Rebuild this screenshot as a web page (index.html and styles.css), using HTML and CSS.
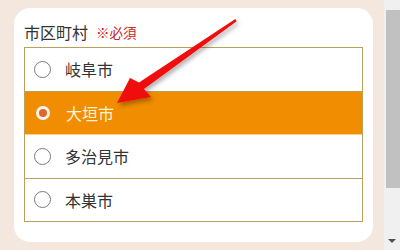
FILE: index.html
```html
<!DOCTYPE html>
<html lang="ja">
<head>
<meta charset="utf-8">
<link rel="stylesheet" href="styles.css">
</head>
<body>
<div class="page">
  <main class="main">
    <section class="card">
      <div class="label">市区町村<span class="req">※必須</span></div>
      <ul class="options">
        <li class="opt"><span class="radio"></span><span class="name">岐阜市</span></li>
        <li class="opt sel"><span class="radio"></span><span class="name">大垣市</span></li>
        <li class="opt"><span class="radio"></span><span class="name">多治見市</span></li>
        <li class="opt"><span class="radio"></span><span class="name">本巣市</span></li>
      </ul>
    </section>
  </main>
  <div class="scrollbar">
    <div class="thumb"></div>
    <div class="spacer"></div>
    <div class="down"></div>
  </div>
  <svg class="arrow" width="400" height="250" viewBox="0 0 400 250">
    <defs>
      <filter id="sh" x="-20%" y="-20%" width="140%" height="140%">
        <feDropShadow dx="2" dy="3" stdDeviation="2" flood-color="#000" flood-opacity="0.3"/>
      </filter>
    </defs>
    <polygon filter="url(#sh)" fill="#f01010" points="117,103 130,78 139,82.5 235.3,19 236.7,21.2 144,89 151,97"/>
  </svg>
</div>
</body>
</html>
```
FILE: styles.css
```css
html, body {
  margin: 0;
  padding: 0;
}
body {
  background: #f3e7de;
  font-family: "Noto Sans CJK JP", "Noto Sans", sans-serif;
  color: #333;
}
.page {
  position: relative;
  display: flex;
  width: 400px;
  height: 250px;
  overflow: hidden;
}
.main {
  width: 384px;
  padding: 8px 11px 0 14px;
  box-sizing: border-box;
}
.card {
  background: #fff;
  border-radius: 16px;
  height: 234px;
  box-sizing: border-box;
  padding: 13px 10px 0 10px;
}
.label {
  font-size: 16px;
  line-height: 22px;
  height: 22px;
  margin-bottom: 4px;
  color: #333;
  display: flex;
  align-items: center;
}
.req {
  font-size: 13.5px;
  color: #cc2222;
  margin-left: 8px;
}
.options {
  list-style: none;
  margin: 0;
  padding: 0;
  border: 1px solid #b9a05c;
}
.opt {
  display: flex;
  align-items: center;
  height: 42.5px;
  padding-left: 9px;
  border-bottom: 1px solid #b9a05c;
  font-size: 16px;
}
.opt:last-child {
  border-bottom: none;
}
.radio {
  width: 17px;
  height: 17px;
  box-sizing: border-box;
  border: 1px solid #7a7a7a;
  border-radius: 50%;
  background: #fff;
  flex: none;
}
.name {
  margin-left: 14px;
}
.opt.sel {
  background: #f08d00;
  color: #fff4d6;
  border-bottom-color: #f6d48a;
}
.opt.sel .radio {
  width: 14px;
  height: 14px;
  margin: 0 1.5px;
  border: 3px solid #fff6ea;
  background: #e0652e;
}
.opt.sel .name {
  margin-left: 15px;
}
.scrollbar {
  width: 16px;
  background: #f0f0f0;
  display: flex;
  flex-direction: column;
  align-items: flex-end;
  padding-top: 10px;
  box-sizing: border-box;
}
.thumb {
  width: 14px;
  height: 178px;
  background: #c1c1c1;
}
.spacer {
  flex: 1;
}
.down {
  width: 0;
  height: 0;
  border-left: 4px solid transparent;
  border-right: 4px solid transparent;
  border-top: 4px solid #505050;
  margin: 0 4px 7px 0;
}
.arrow {
  position: absolute;
  left: 0;
  top: 0;
  pointer-events: none;
}
```
